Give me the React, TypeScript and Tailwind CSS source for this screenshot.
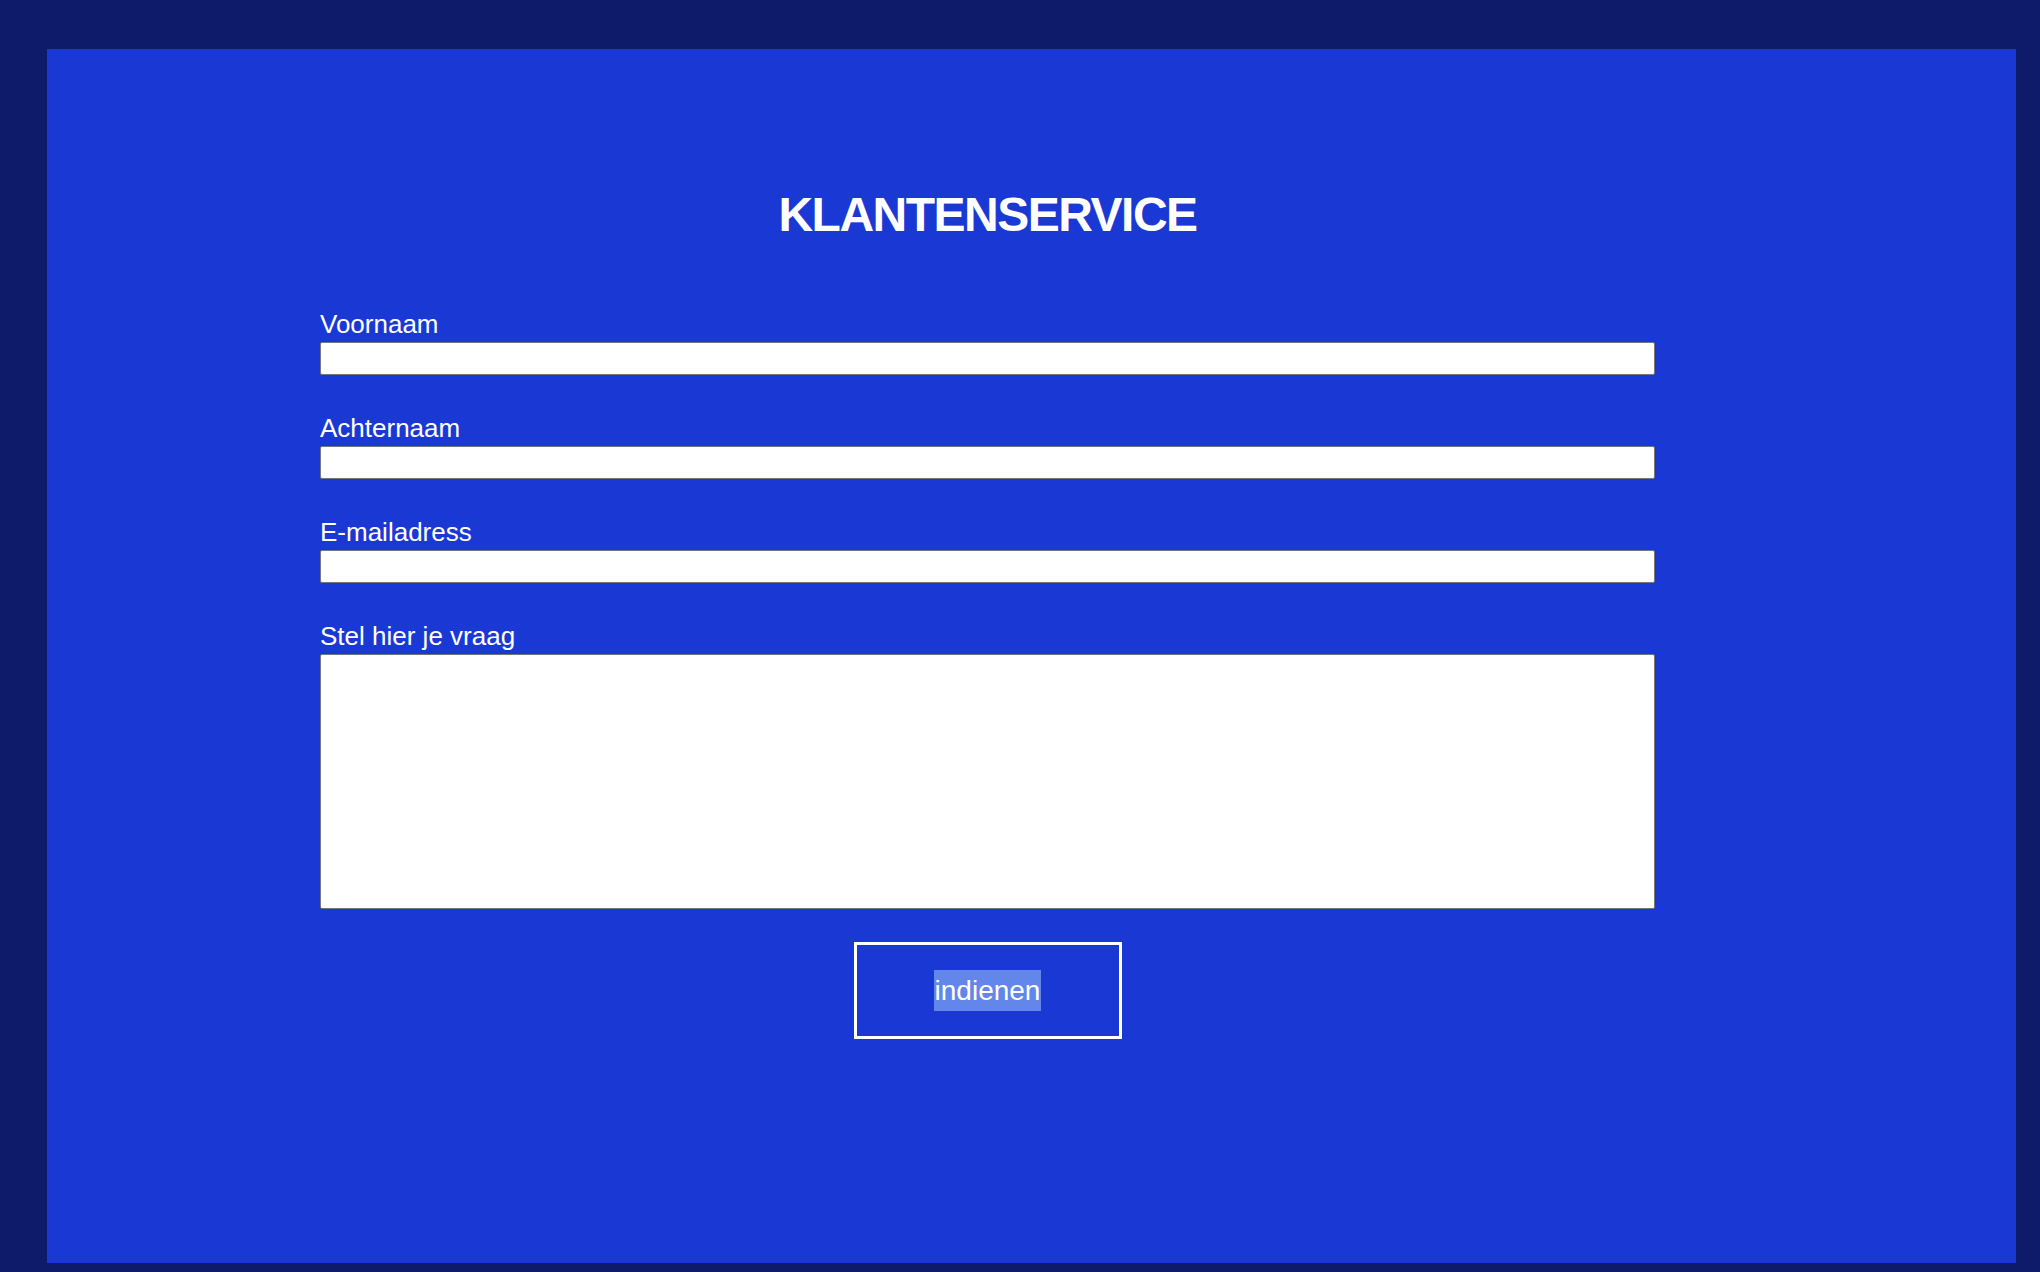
import React from "react";

export default function App() {
  const font = { fontFamily: '"Liberation Sans", Arial, sans-serif' };
  const fields = ["Voornaam", "Achternaam", "E-mailadress"];
  return (
    <div className="min-h-screen w-full bg-[#0d1b6a] pt-[49px] pl-[47px] pb-[9px]" style={font}>
      <div className="w-[1969px] h-[1214px] bg-[#1a39d4] pt-[138px] pl-[273px]">
        <div className="w-[1335px] flex flex-col">
          <h1 className="h-[56px] leading-[56px] text-center text-white font-bold text-[48px] tracking-[-1.5px]">
            KLANTENSERVICE
          </h1>
          <div className="mt-[66px] flex flex-col">
            {fields.map((f, i) => (
              <div key={f} className={i === 0 ? "flex flex-col" : "flex flex-col mt-[38px]"}>
                <label className="h-[30px] leading-[30px] text-[26px] text-white">{f}</label>
                <input
                  type="text"
                  className="mt-[3px] h-[33px] w-full bg-white border border-[#767676] rounded-[2px] outline-none"
                />
              </div>
            ))}
            <div className="flex flex-col mt-[38px]">
              <label className="h-[30px] leading-[30px] text-[26px] text-white">Stel hier je vraag</label>
              <textarea className="mt-[3px] h-[255px] w-full bg-white border border-[#767676] rounded-[2px] outline-none resize-none" />
            </div>
            <div className="flex justify-center mt-[33px]">
              <button className="w-[268px] h-[97px] border-[3px] border-white flex items-center justify-center bg-transparent">
                <span className="bg-[#6286e9] text-white text-[28px] leading-[41px] px-[1px]">indienen</span>
              </button>
            </div>
          </div>
        </div>
      </div>
    </div>
  );
}
